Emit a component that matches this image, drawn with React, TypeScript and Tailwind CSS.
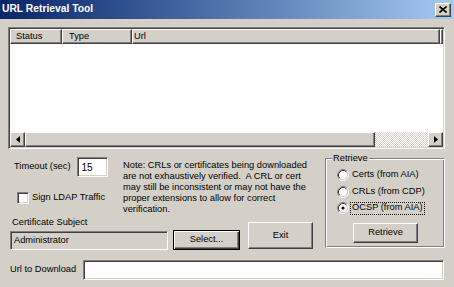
import React from "react";

const raised =
  "border border-t-white border-l-white border-r-[#404040] border-b-[#404040] shadow-[inset_-1px_-1px_0_#808080]";
const sunken =
  "border border-t-[#808080] border-l-[#808080] border-r-white border-b-white shadow-[inset_1px_1px_0_#404040,inset_-1px_-1px_0_#d4d0c8]";

const Radio = ({ checked }: { checked?: boolean }) => (
  <svg width="12" height="12" viewBox="0 0 12 12" className="shrink-0">
    <circle cx="6" cy="6" r="4.5" fill="#fff" />
    <path d="M2.11 9.89 A5.5 5.5 0 0 1 9.89 2.11" stroke="#808080" fill="none" />
    <path d="M9.89 2.11 A5.5 5.5 0 0 1 2.11 9.89" stroke="#fff" fill="none" />
    <path d="M2.82 9.18 A4.5 4.5 0 0 1 9.18 2.82" stroke="#404040" fill="none" />
    <path d="M9.18 2.82 A4.5 4.5 0 0 1 2.82 9.18" stroke="#d4d0c8" fill="none" />
    {checked && <circle cx="6" cy="6" r="1.6" fill="#000" />}
  </svg>
);

const Column = ({ label, w, pad }: { label: string; w: string; pad: string }) => (
  <div className={`${raised} ${w} ${pad} h-full flex items-center shrink-0`}>{label}</div>
);

export default function App() {
  return (
    <div className="w-[454px] h-[287px] bg-[#d4d0c8] overflow-hidden flex flex-col font-['Liberation_Sans',Arial,sans-serif] text-[9.3px] text-black">
      {/* title bar */}
      <div className="h-[19px] shrink-0 flex items-center bg-linear-to-r from-[#0a246a] to-[#a6caf0] pl-[2px] pr-[3px]">
        <span className="text-white font-bold text-[10.3px] leading-none">URL Retrieval Tool</span>
        <div className={`${raised} ml-auto w-[16px] h-[14px] bg-[#d4d0c8] flex items-center justify-center`}>
          <svg width="8" height="7" viewBox="0 0 8 7">
            <path d="M0.5 0.5 L7.5 6.5 M7.5 0.5 L0.5 6.5" stroke="#000" strokeWidth="1.6" />
          </svg>
        </div>
      </div>

      {/* list view */}
      <div className={`${sunken} ml-[8px] mt-[8px] w-[437px] h-[122px] shrink-0 p-[1px] flex flex-col bg-white`}>
        <div className="h-[15px] flex bg-[#d4d0c8]">
          <Column label="Status" w="w-[52px]" pad="pl-[5px]" />
          <Column label="Type" w="w-[70px]" pad="pl-[6px]" />
          <Column label="Url" w="w-[308px]" pad="pl-[1px]" />
          <div className={`${raised} flex-1`} />
        </div>
        <div className="flex-1" />
        <div className="h-[15px] flex bg-[#d4d0c8]">
          <div className={`${raised} w-[15px] flex items-center justify-center`}>
            <svg width="4" height="7" viewBox="0 0 4 7">
              <path d="M4 0 L0 3.5 L4 7 Z" fill="#000" />
            </svg>
          </div>
          <div className={`${raised} w-[350px]`} />
          <div className="flex-1 bg-[repeating-conic-gradient(#ffffff_0%_25%,#d4d0c8_0%_50%)] bg-[length:2px_2px]" />
          <div className={`${raised} w-[15px] flex items-center justify-center`}>
            <svg width="4" height="7" viewBox="0 0 4 7">
              <path d="M0 0 L4 3.5 L0 7 Z" fill="#000" />
            </svg>
          </div>
        </div>
      </div>

      {/* middle section */}
      <div className="flex shrink-0">
        <div className="w-[317px] flex flex-col">
          <div className="flex mt-[7px] h-[60px]">
            <div className="w-[123px] pl-[14px] shrink-0">
              <div className="flex items-center h-[20px] mt-[1px]">
                <span>Timeout (sec)</span>
                <div className={`${sunken} ml-[7px] w-[31px] h-[20px] bg-white pl-[3px] flex items-center text-[10px]`}>
                  15
                </div>
              </div>
              <div className="flex items-center mt-[14px] pl-[3px]">
                <div className={`${sunken} w-[12px] h-[12px] bg-white shrink-0`} />
                <span className="ml-[3px]">Sign LDAP Traffic</span>
              </div>
            </div>
            <p className="mt-[4px] leading-[11px] whitespace-pre">
              {"Note: CRLs or certificates being downloaded\nare not exhaustively verified.  A CRL or cert\nmay still be inconsistent or may not have the\nproper extensions to allow for correct\nverification."}
            </p>
          </div>
          <div className="flex items-end">
            <div className="ml-[10px] w-[158px] shrink-0">
              <div className="pl-[2px] leading-[12px]">Certificate Subject</div>
              <div className={`${sunken} mt-[3px] h-[19px] pl-[3px] flex items-center`}>Administrator</div>
            </div>
            <button
              className="ml-[5px] w-[67px] h-[20px] border border-black shadow-[inset_1px_1px_0_#fff,inset_-1px_-1px_0_#404040,inset_-2px_-2px_0_#808080] flex items-center justify-center"
            >
              Select...
            </button>
            <button className={`${raised} ml-[8px] mb-[1px] w-[65px] h-[27px] flex items-center justify-center`}>
              Exit
            </button>
          </div>
        </div>

        <fieldset className="ml-[8px] mt-[3px] w-[120px] h-[96px] border border-t-[#808080] border-l-[#808080] border-r-white border-b-white shadow-[inset_1px_1px_0_#fff,inset_-1px_-1px_0_#808080] pl-[11px]">
          <legend className="ml-[-5px] px-[1px] leading-[12px] bg-[#d4d0c8]">Retrieve</legend>
          <div className="flex flex-col">
            <label className="flex items-center h-[12px] mt-[5px]">
              <Radio />
              <span className="ml-[2px] px-[1px]">Certs (from AIA)</span>
            </label>
            <label className="flex items-center h-[12px] mt-[5px]">
              <Radio />
              <span className="ml-[2px] px-[1px]">CRLs (from CDP)</span>
            </label>
            <label className="flex items-center h-[12px] mt-[4px]">
              <Radio checked />
              <span className="ml-[1px] px-[1px] h-[13px] flex items-center border border-dotted border-black">
                OCSP (from AIA)
              </span>
            </label>
            <button className={`${raised} ml-[16px] mt-[9px] w-[65px] h-[20px] flex items-center justify-center`}>
              Retrieve
            </button>
          </div>
        </fieldset>
      </div>

      {/* url row */}
      <div className="flex items-center mt-[10px] shrink-0">
        <span className="ml-[10px] w-[73px] shrink-0">Url to Download</span>
        <div className={`${sunken} w-[361px] h-[20px] bg-white`} />
      </div>
    </div>
  );
}
